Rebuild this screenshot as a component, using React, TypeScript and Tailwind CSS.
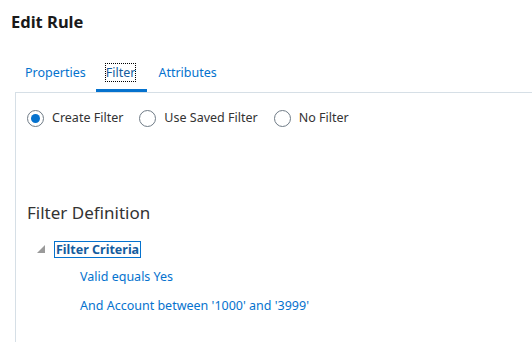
const font = { fontFamily: '"Noto Sans", "Open Sans", sans-serif' };

function Radio({ label, checked }: { label: string; checked?: boolean }) {
  return (
    <label className="flex items-center gap-2">
      <span className="w-[17px] h-[17px] rounded-full border border-[#6f7b86] flex items-center justify-center bg-white">
        {checked && <span className="w-[9px] h-[9px] rounded-full bg-[#0572ce]" />}
      </span>
      <span className="text-[12.5px] text-[#333333]">{label}</span>
    </label>
  );
}

export default function App() {
  return (
    <div className="w-[532px] h-[342px] bg-white overflow-hidden" style={font}>
      <h1 className="pl-[11px] pt-[11px] text-[16.5px] font-bold text-[#1a1a1a] leading-[22px]">Edit Rule</h1>

      <div className="flex pl-[15px] mt-[31px] text-[12.5px] leading-[18px]">
        <div className="px-[10px] pb-[9px] text-[#0572ce]">Properties</div>
        <div className="pl-[10px] pr-[12px] pb-[7px] border-b-[3px] border-[#0572ce] text-[#145c9e]">
          <span className="outline outline-1 outline-dotted outline-black outline-offset-0">Filter</span>
        </div>
        <div className="px-[11px] pb-[9px] text-[#0572ce]">Attributes</div>
      </div>

      <div className="ml-[15px] border-l border-t border-[#d6dfe6] h-[260px] pl-[11px] pt-[16px]">
        <div className="flex gap-[16px]">
          <Radio label="Create Filter" checked />
          <Radio label="Use Saved Filter" />
          <Radio label="No Filter" />
        </div>

        <h2 className="mt-[74px] text-[17px] text-[#333333] leading-[22px]">Filter Definition</h2>

        <div className="mt-[17px] flex items-center pl-[10px]">
          <svg width="8" height="8" viewBox="0 0 8 8" className="mr-[9px]">
            <polygon points="8,0 8,8 0,8" fill="#9a9a9a" />
          </svg>
          <span className="border border-[#0572ce] px-[1px] text-[12.5px] font-bold text-[#145c9e] leading-[15px]">Filter Criteria</span>
        </div>

        <div className="pl-[53px] text-[12.5px] text-[#0572ce]">
          <div className="mt-[10px]">Valid equals Yes</div>
          <div className="mt-[10px]">And Account between '1000' and '3999'</div>
        </div>
      </div>
    </div>
  );
}
